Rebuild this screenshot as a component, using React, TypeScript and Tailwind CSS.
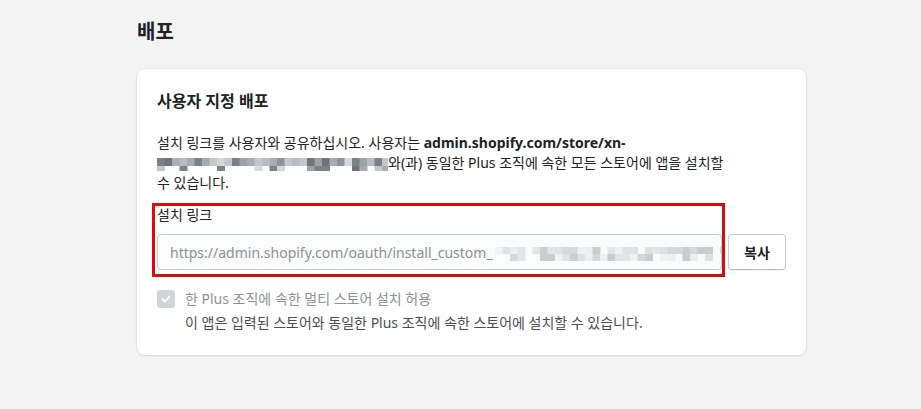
import React from "react";

function rand(seed: number) {
  let s = seed;
  return () => {
    s = (s * 9301 + 49297) % 233280;
    return s / 233280;
  };
}

function Mosaic({
  cols,
  cell,
  rows,
  palette,
  seed,
  width,
}: {
  cols: number;
  cell: number;
  rows: { h: number; density: number }[];
  palette: string[];
  seed: number;
  width: number;
}) {
  const r = rand(seed);
  const rects: React.ReactElement[] = [];
  let y = 0;
  rows.forEach((row, ri) => {
    for (let c = 0; c < cols; c++) {
      if (r() < row.density) {
        const col = palette[Math.floor(r() * palette.length)];
        rects.push(
          <rect key={`${ri}-${c}`} x={c * cell} y={y} width={cell + 0.5} height={row.h} fill={col} />
        );
      }
    }
    y += row.h;
  });
  return (
    <svg width={width} height={y} viewBox={`0 0 ${width} ${y}`} className="inline-block align-middle">
      {rects}
    </svg>
  );
}

export default function App() {
  const font = { fontFamily: '"Noto Sans", "Noto Sans CJK KR", sans-serif' };
  return (
    <div className="min-h-[409px] w-[921px] bg-[#f3f3f3] text-[#202223]" style={font}>
      <div className="pl-[137px] pt-[18px]">
        <h1 className="text-[20px] font-bold leading-[28px] text-[#202223]">배포</h1>
        <div className="mt-[23px] w-[669px] rounded-[8px] bg-white px-[20px] pt-[20px] pb-[22px] shadow-[0_0_0_1px_rgba(63,63,68,0.04),0_1px_3px_0_rgba(63,63,68,0.12)]">
          <h2 className="text-[16px] font-bold leading-[24px]">사용자 지정 배포</h2>
          <p className="mt-[20px] text-[14px] leading-[20px]">
            <span className="whitespace-nowrap">
              설치 링크를 사용자와 공유하십시오. 사용자는{" "}
              <span className="font-bold">admin.shopify.com/store/xn-</span>
            </span>
            <br />
            <span className="whitespace-nowrap">
              <span className="inline-block align-middle -mt-[3px]">
                <Mosaic
                  cols={31}
                  cell={7.5}
                  width={231}
                  seed={17}
                  rows={[
                    { h: 8, density: 1.1 },
                    { h: 5, density: 0.25 },
                  ]}
                  palette={["#8f949a", "#a9adb2", "#c4c7cb", "#6f747a", "#b8bcc1", "#d6d8db", "#9da2a8", "#7d8288"]}
                />
              </span>
              와(과) 동일한 Plus 조직에 속한 모든 스토어에 앱을 설치할
            </span>
            <br />
            수 있습니다.
          </p>

          <div className="mt-[12px] flex items-end gap-[6px]">
            <div className="relative w-[565px]">
              <div className="pointer-events-none absolute -left-[5px] -right-[3px] -top-[2px] -bottom-[7px] border-[3px] border-[#d80c0c]" />
              <div className="text-[14px] leading-[20px]">설치 링크</div>
              <div className="mt-[9px] flex h-[36px] items-center overflow-hidden rounded-[4px] border border-[#c9cccf] bg-[#fafbfb] pl-[12px] text-[14px] text-[#8c9196]">
                <span className="whitespace-nowrap">https://admin.shopify.com/oauth/install_custom_</span>
                <span className="ml-[2px] inline-block">
                  <Mosaic
                    cols={36}
                    cell={7.5}
                    width={270}
                    seed={5}
                    rows={[
                      { h: 7, density: 0.9 },
                      { h: 7, density: 0.6 },
                    ]}
                    palette={["#e3e5e7", "#d5d8db", "#eceef0", "#c9ccd0", "#dfe1e4", "#f0f1f2"]}
                  />
                </span>
              </div>
            </div>
            <button className="h-[36px] w-[59px] rounded-[4px] border border-[#c9cccf] border-b-[#babfc3] bg-white text-[14px] font-semibold text-[#202223] shadow-[0_1px_0_rgba(0,0,0,0.05)]">
              복사
            </button>
          </div>

          <div className="mt-[19px] flex items-start gap-[10px]">
            <div className="mt-[1px] flex h-[18px] w-[18px] shrink-0 items-center justify-center rounded-[3px] bg-[#d2d5d8]">
              <svg width="12" height="12" viewBox="0 0 12 12" fill="none">
                <path d="M2.5 6.2 L5 8.5 L9.5 3.5" stroke="white" strokeWidth="1.8" strokeLinecap="round" strokeLinejoin="round" />
              </svg>
            </div>
            <div>
              <div className="text-[14px] leading-[20px] text-[#8c9196]">한 Plus 조직에 속한 멀티 스토어 설치 허용</div>
              <div className="mt-[4px] text-[14px] leading-[20px] text-[#4a4d50]">
                이 앱은 입력된 스토어와 동일한 Plus 조직에 속한 스토어에 설치할 수 있습니다.
              </div>
            </div>
          </div>
        </div>
      </div>
    </div>
  );
}
